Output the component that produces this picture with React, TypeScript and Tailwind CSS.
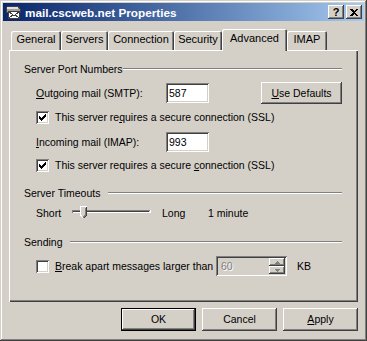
import React from 'react';

const raised =
  'shadow-[inset_-1px_-1px_0_#404040,inset_1px_1px_0_#fff,inset_-2px_-2px_0_#808080,inset_2px_2px_0_#d4d0c8]';
const sunken =
  'shadow-[inset_1px_1px_0_#808080,inset_-1px_-1px_0_#fff,inset_2px_2px_0_#404040,inset_-2px_-2px_0_#d4d0c8]';

const checkPixels = ['......X', '.....XX', 'X...XXX', 'XX.XXX.', 'XXXXX..', '.XXX...', '..X....'];

function CheckBox({ checked }: { checked: boolean }) {
  return (
    <span className={`w-[13px] h-[13px] bg-white shrink-0 flex items-center justify-center ${sunken}`}>
      {checked && (
        <svg width="7" height="7" viewBox="0 0 7 7" shapeRendering="crispEdges">
          {checkPixels.map((row, y) =>
            row.split('').map((c, x) => (c === 'X' ? <rect key={`${x}-${y}`} x={x} y={y} width="1" height="1" fill="#000" /> : null))
          )}
        </svg>
      )}
    </span>
  );
}

function GroupHeader({ label, w }: { label: string; w: string }) {
  return (
    <div className="flex items-center h-[14px]">
      <span className={`${w} shrink-0 whitespace-nowrap`}>{label}</span>
      <div className="flex-1 h-[2px] border-t border-t-[#808080] border-b border-b-white" />
    </div>
  );
}

function Tab({ label, w, active }: { label: string; w: string; active?: boolean }) {
  if (active) {
    return (
      <div
        className={`${w} h-[22px] -mb-px relative z-10 bg-[#d4d0c8] rounded-t-[2px] flex justify-center pt-[3px] shadow-[inset_1px_1px_0_#fff,inset_-1px_0_0_#404040,inset_-2px_0_0_#808080]`}
      >
        {label}
      </div>
    );
  }
  return (
    <div
      className={`${w} h-[19px] rounded-t-[2px] flex justify-center pt-[2px] shadow-[inset_1px_1px_0_#fff,inset_-1px_0_0_#404040,inset_-2px_0_0_#808080]`}
    >
      {label}
    </div>
  );
}

function Button({ children, def }: { children: React.ReactNode; def?: boolean }) {
  if (def) {
    return (
      <div className="w-[75px] h-[23px] border border-black">
        <div className={`w-full h-full flex items-center justify-center ${raised}`}>{children}</div>
      </div>
    );
  }
  return <div className={`w-[75px] h-[23px] flex items-center justify-center ${raised}`}>{children}</div>;
}

function MailIcon() {
  return (
    <svg width="16" height="16" viewBox="0 0 16 16" shapeRendering="crispEdges">
      <path d="M3 2h10l2 3v3H1V5z" fill="#a0a0a0" stroke="#404040" strokeWidth="1" />
      <rect x="2" y="3" width="11" height="2" fill="#e0e0e0" />
      <rect x="3.5" y="7.5" width="11" height="7" fill="#fff" stroke="#404040" />
      <path d="M3.5 7.5l5.5 4 5.5-4M3.5 14.5l4-3.5M14.5 14.5l-4-3.5" fill="none" stroke="#404040" />
    </svg>
  );
}

function Slider() {
  return (
    <svg width="79" height="14" viewBox="0 0 79 14" shapeRendering="crispEdges">
      <rect x="0" y="4" width="78" height="1" fill="#808080" />
      <rect x="1" y="5" width="76" height="1" fill="#404040" />
      <rect x="0" y="6" width="79" height="1" fill="#fff" />
      <rect x="78" y="4" width="1" height="3" fill="#fff" />
      <rect x="0" y="4" width="1" height="3" fill="#808080" />
      <path d="M8 0h7v9l-3.5 4L8 9z" fill="#d4d0c8" />
      <path d="M8.5 9V0.5H14.5" fill="none" stroke="#fff" />
      <path d="M14.5 0.5V9l-3 3.5" fill="none" stroke="#404040" />
      <path d="M13.5 1.5V9l-2.5 2.5" fill="none" stroke="#808080" />
      <path d="M8.5 9l3 3.5" fill="none" stroke="#fff" />
    </svg>
  );
}

function Spinner() {
  return (
    <div className={`w-[71px] h-[20px] bg-[#d4d0c8] flex items-center pl-[5px] pr-[2px] ${sunken}`}>
      <span className="flex-1 text-[#808080] [text-shadow:1px_1px_0_#fff]">60</span>
      <div className="flex flex-col w-[16px] h-[16px]">
        <div className={`h-[8px] flex items-center justify-center ${raised}`}>
          <svg width="5" height="3" viewBox="0 0 5 3" shapeRendering="crispEdges">
            <path d="M2 0h1v1h1v1h1v1H0V2h1V1h1z" fill="#808080" />
          </svg>
        </div>
        <div className={`h-[8px] flex items-center justify-center ${raised}`}>
          <svg width="5" height="3" viewBox="0 0 5 3" shapeRendering="crispEdges">
            <path d="M0 0h5v1H4v1H3v1H2V2H1V1H0z" fill="#808080" />
          </svg>
        </div>
      </div>
    </div>
  );
}

export default function App() {
  return (
    <div className="w-[367px] h-[341px] p-[3px] flex flex-col bg-[#d4d0c8] text-black text-[10.5px] leading-[13px] font-['Liberation_Sans',Arial,sans-serif] shadow-[inset_-1px_-1px_0_#404040,inset_1px_1px_0_#d4d0c8,inset_-2px_-2px_0_#808080,inset_2px_2px_0_#fff]">
      {/* title bar */}
      <div className="h-[18px] shrink-0 flex items-center pl-[2px] pr-[2px] bg-linear-to-r from-[#0a246a] to-[#a6caf0]">
        <MailIcon />
        <span className="ml-[4px] text-white font-bold text-[11.75px] whitespace-nowrap">mail.cscweb.net Properties</span>
        <div className="flex-1" />
        <div className={`w-[16px] h-[14px] bg-[#d4d0c8] flex items-center justify-center font-bold text-[11px] ${raised}`}>?</div>
        <div className={`ml-[2px] w-[16px] h-[14px] bg-[#d4d0c8] flex items-center justify-center ${raised}`}>
          <svg width="8" height="7" viewBox="0 0 8 7" shapeRendering="crispEdges">
            <path d="M0 0h2l2 2 2-2h2L5 3.5 8 7H6L4 5 2 7H0l3-3.5z" fill="#000" />
          </svg>
        </div>
      </div>

      {/* body */}
      <div className="flex-1 flex flex-col px-[6px] pt-[8px]">
        <div className="flex items-end pl-[2px] h-[21px] text-[11px]">
          <Tab label="General" w="w-[50px]" />
          <Tab label="Servers" w="w-[47px]" />
          <Tab label="Connection" w="w-[66px]" />
          <Tab label="Security" w="w-[48px]" />
          <Tab label="Advanced" w="w-[65px]" active />
          <Tab label="IMAP" w="w-[40px]" />
        </div>

        <div className="h-[252px] flex flex-col pt-[12px] pl-[15px] pr-[16px] shadow-[inset_1px_1px_0_#fff,inset_-1px_-1px_0_#404040,inset_-2px_-2px_0_#808080]">
          <GroupHeader label="Server Port Numbers" w="w-[99px]" />

          <div className="mt-[6px] h-[22px] flex items-center pl-[12px]">
            <span className="w-[130px] shrink-0">
              <u>O</u>utgoing mail (SMTP):
            </span>
            <div className={`w-[43px] h-[20px] bg-white flex items-center pl-[3px] ${sunken}`}>587</div>
            <div className="flex-1" />
            <div className={`w-[81px] h-[22px] flex items-center justify-center ${raised}`}>
              <span>
                <u>U</u>se Defaults
              </span>
            </div>
          </div>

          <div className="mt-[6px] h-[14px] flex items-center pl-[12px] gap-[6px]">
            <CheckBox checked />
            <span>
              This server re<u>q</u>uires a secure connection (SSL)
            </span>
          </div>

          <div className="mt-[8px] h-[20px] flex items-center pl-[12px]">
            <span className="w-[130px] shrink-0">
              <u>I</u>ncoming mail (IMAP):
            </span>
            <div className={`w-[43px] h-[20px] bg-white flex items-center pl-[3px] ${sunken}`}>993</div>
          </div>

          <div className="mt-[6px] h-[14px] flex items-center pl-[12px] gap-[6px]">
            <CheckBox checked />
            <span>
              This server requires a secure <u>c</u>onnection (SSL)
            </span>
          </div>

          <div className="mt-[14px]">
            <GroupHeader label="Server Timeouts" w="w-[84px]" />
          </div>

          <div className="mt-[5px] h-[16px] flex items-center pl-[12px]">
            <span className="w-[36px] shrink-0">Short</span>
            <Slider />
            <span className="ml-[11px] w-[46px] shrink-0">Long</span>
            <span>1 minute</span>
          </div>

          <div className="mt-[14px]">
            <GroupHeader label="Sending" w="w-[46px]" />
          </div>

          <div className="mt-[7px] h-[20px] flex items-center pl-[12px]">
            <CheckBox />
            <span className="ml-[6px] w-[161px] shrink-0 whitespace-nowrap">
              <u>B</u>reak apart messages larger than
            </span>
            <Spinner />
            <span className="ml-[10px]">KB</span>
          </div>
        </div>

        <div className="mt-[6px] h-[23px] flex justify-end gap-[6px]">
          <Button def>OK</Button>
          <Button>Cancel</Button>
          <Button>
            <span>
              <u>A</u>pply
            </span>
          </Button>
        </div>
      </div>
    </div>
  );
}
